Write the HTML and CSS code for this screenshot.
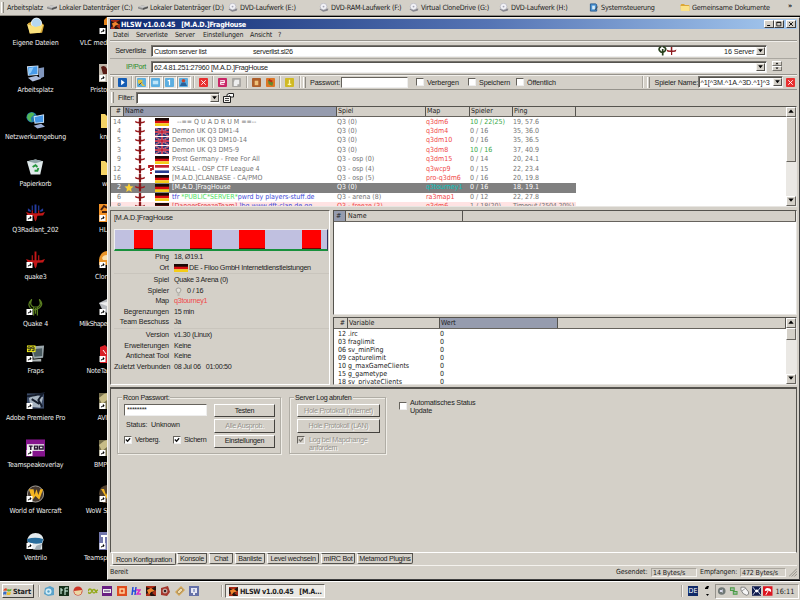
FILE: index.html
```html
<!DOCTYPE html>
<html lang="de">
<head>
<meta charset="utf-8">
<title>HLSW v1.0.0.45</title>
<link rel="stylesheet" href="styles.css">
</head>
<body>
<svg class="defs" width="0" height="0">
  <symbol id="quake" viewBox="0 0 12 10"><path d="M.5 3L3 4.200H9L11.500 3 11 5.400 7.200 6V8.500L6 10 4.800 8.500V6L1 5.400ZM4.700 0H7.300V5H4.700Z" fill="#9c1a1e"/><path d="M5.500 1H6.500V8H5.500Z" fill="#5c1418"/></symbol>
  <symbol id="de" viewBox="0 0 14 8" preserveAspectRatio="none"><path fill="#1a0804" d="M0 0h14v3H0z"/><path fill="#d90d10" d="M0 2.700h14v2.600H0z"/><path fill="#f5cc16" d="M0 5.300h14V8H0z"/></symbol>
  <symbol id="uk" viewBox="0 0 14 8" preserveAspectRatio="none"><path fill="#273070" d="M0 0h14v8H0z"/><path d="M0 0l14 8M14 0L0 8" stroke="#c8a8c0" stroke-width="1.500"/><path d="M0 0l14 8M14 0L0 8" stroke="#b83048" stroke-width=".8"/><path d="M7 0v8M0 4h14" stroke="#d8b8c8" stroke-width="2.200"/><path d="M7 0v8M0 4h14" stroke="#c01830" stroke-width="1.400"/></symbol>
  <symbol id="nl" viewBox="0 0 14 8" preserveAspectRatio="none"><path fill="#c8202c" d="M0 0h14v3H0z"/><path fill="#fff" d="M0 2.700h14v2.700H0z"/><path fill="#283c90" d="M0 5.400h14V8H0z"/></symbol>
  <symbol id="drive" viewBox="0 0 10 8"><path d="M0 3.500L4 2 10 3 9.500 5 5 6.500 0 5Z" fill="#8b8b8b"/><path d="M0 3.500L4 2 10 3 5 4.500Z" fill="#c9c9c9"/><path d="M5 4.500L10 3V4.500L5 6.300Z" fill="#555"/></symbol>
  <symbol id="disc" viewBox="0 0 10 10"><path d="M0 7L3 5.500 10 6.500 9 8.500 4 9.700Z" fill="#85858d"/><circle cx="4.500" cy="4" r="3.700" fill="#f1f1f6" stroke="#a5a5b1" stroke-width=".6"/><circle cx="4.500" cy="4" r="1" fill="#a6a6b6"/></symbol>
  <symbol id="folder" viewBox="0 0 20 18"><path d="M1 4L3 2H8L10 4H17Q19 4 19 6V16H2Z" fill="#dca735"/><path d="M1 6H17Q19 6 19 8V16H2Z" fill="#fbe289"/></symbol>
  <symbol id="open" viewBox="0 0 20 18"><path d="M2 6L12 2 19 8 17 16 4 17Z" fill="#d9a836"/><circle cx="11" cy="6" r="5.300" fill="#b5d7f0" stroke="#eef6fb"/><path d="M1 7L10 10 18 8 15 16 4 17Z" fill="#fae17c"/></symbol>
  <symbol id="pc" viewBox="0 0 20 18"><path d="M13 4L19 3V13L14 15Z" fill="#8196bd"/><path d="M1 2L13 1V11L2 12Z" fill="#d6e5f5"/><path d="M2 3L12 2V10L3 11Z" fill="#489bea"/><path d="M3 4L8 3 5 9 3 10Z" fill="#8dcafa"/><path d="M2 14L11 12 16 15 7 18Z" fill="#aebddc"/></symbol>
  <symbol id="net" viewBox="0 0 20 18"><circle cx="6" cy="6" r="5.500" fill="#227bae"/><path d="M2 3Q7-1 9 3L5 7 6 11Q2 10 1 6Z" fill="#52b857"/><path d="M8 5L19 3V12L9 13Z" fill="#d0e4f7"/><path d="M9 6L18 4V11L10 12Z" fill="#4395e5"/><path d="M8 15L16 13 20 16 12 18Z" fill="#9baed5"/></symbol>
  <symbol id="bin" viewBox="0 0 20 18"><path d="M1 3L10 1 18 3 15 17 5 17Z" fill="#dfe9ea"/><path d="M2 3L10 5 17 3 10 1Z" fill="#8fa4a8"/><path d="M7 9L10 7 12 9M13 10L12 13H9" stroke="#24953c" stroke-width="2" fill="none"/></symbol>
  <symbol id="q3" viewBox="0 0 20 18"><path d="M0 8L4 9.300H16L20 8 18 11.500 12 12 11 16 10 18 9 16 8 12 2 11.500ZM9 0H11V11H9ZM6 4H7.200V11H6ZM12.800 4H14V11H12.800Z" fill="#c41718"/></symbol>
  <symbol id="q3b" viewBox="0 0 20 18"><path d="M0 8L4 9.300H16L20 8 18 11.500 12 12 11 16 10 18 9 16 8 12 2 11.500ZM6 6H7.200V11H6ZM12.800 6H14V11H12.800Z" fill="#c41718"/><path d="M9 0H11V9H9ZM6 1H7.200V6H6ZM12.800 1H14V6H12.800ZM2 4L5 6V8L2 7ZM18 4L15 6V8L18 7Z" fill="#243ca0"/></symbol>
  <symbol id="q4" viewBox="0 0 20 18"><path d="M6 1Q0 7 6 11Q8 13 12 11Q20 7 14 1Q17 7 12 9H8Q3 7 6 1ZM8 9V18M12 9V18M10 10V16" fill="none" stroke="#587c20" stroke-width="1.300"/></symbol>
  <symbol id="fraps" viewBox="0 0 20 18"><path d="M5 1L19 0 18 13 8 14Z" fill="#9aa6ab"/><path d="M7 4L17 3V11L9 12Z" fill="#4b5c61"/><path d="M6 15L16 14V17H7Z" fill="#a9b0b0"/><path d="M1 0H10V7H1Z" fill="#f5f118"/><path d="M4.500 3.500H2V1.500H4.500V5.500H2M8.500 3.500H6V1.500H8.500V5.500H6" stroke="#222" fill="none"/></symbol>
  <symbol id="prem" viewBox="0 0 20 18"><path d="M1 1H19V17H1Z" fill="#3c4b67"/><path d="M3 6L10 2 18 5 15 16 5 15Z" fill="#a7b4c1"/><path d="M1 4L9 3 18 1 13 8 17 15M6 7L14 12" stroke="#151d2c" stroke-width="2" fill="none"/></symbol>
  <symbol id="tso" viewBox="0 0 20 18"><path d="M0 0H20V18H0Z" fill="#85148d"/><path d="M1 5H19V12H1Z" fill="#eee"/><path d="M3 7H7M5 7V11M9 7H12V10H9ZM14 7H18V10H14Z" stroke="#261130" stroke-width="1.500" fill="none"/></symbol>
  <symbol id="wow" viewBox="0 0 20 18"><circle cx="10" cy="9" r="8.500" fill="#45382f" stroke="#a6a29c"/><path d="M3 4H8L9 10 11 4 13 10 15 4H18L14 15 10 11 7 15Z" fill="#f3b521"/></symbol>
  <symbol id="vent" viewBox="0 0 20 18"><path d="M10 .5Q18 1 18.500 8L17 12V18H8Q1 15 1.500 7Q3 1 10 .5Z" fill="#e4eaed"/><path d="M1 7Q10 4 18 7L17 11Q9 13 2 10Z" fill="#286d9d"/><path d="M11 14L17 12 15 18H9Z" fill="#a3b0b8"/></symbol>
  <symbol id="arrow" viewBox="0 0 7 7"><path fill="#fff" d="M0 0h7v7H0z"/><path d="M1.500 6Q1.500 3 4 2.800V1L6 3.200 4 5V4Q2.500 4 1.500 6Z"/></symbol>
  <symbol id="hlsw" viewBox="0 0 10 10"><path fill="#a92b18" d="M0 0h10v10H0z"/><path d="M0 1L5 3 10 0V4L6 7 10 10H5L2 7 0 8Z" fill="#251410"/><path d="M1 4L5 2 9 5 5 6 3 9Z" fill="#f0852e"/></symbol>
  <symbol id="box" viewBox="0 0 10 10"><path d="M0 1Q0 0 1 0H9Q10 0 10 1V9Q10 10 9 10H1Q0 10 0 9Z" fill="currentColor"/></symbol>
  <symbol id="down" viewBox="0 0 6 4"><path d="M1 .5H5L3 3Z"/></symbol>
  <symbol id="up" viewBox="0 0 6 4"><path d="M1 3H5L3 .5Z"/></symbol>
  <symbol id="check" viewBox="0 0 7 7"><path d="M1 3L3 5 6 1.500" fill="none" stroke="currentColor" stroke-width="1.500"/></symbol>
</svg>

<nav class="linkbar">
  <i class="grip"></i>
  <span class="lk l1">Arbeitsplatz</span>
  <span class="lk l2"><svg><use href="#drive"/></svg>Lokaler Datenträger (C:)</span>
  <span class="lk l3"><svg><use href="#drive"/></svg>Lokaler Datenträger (D:)</span>
  <span class="lk l4"><svg><use href="#disc"/></svg>DVD-Laufwerk (E:)</span>
  <span class="lk l5"><svg><use href="#disc"/></svg>DVD-RAM-Laufwerk (F:)</span>
  <span class="lk l6"><svg><use href="#disc"/></svg>Virtual CloneDrive (G:)</span>
  <span class="lk l7"><svg><use href="#disc"/></svg>DVD-Laufwerk (H:)</span>
  <span class="lk l8"><svg viewBox="0 0 10 10"><path d="M1 1H7L8 2V9H1Z" fill="#4d96d5" stroke="#23578d"/><path d="M3 3H6V7H3Z" fill="#d8edfb"/><path d="M6 8L9 4" stroke="#444"/></svg>Systemsteuerung</span>
  <span class="lk l9"><svg><use href="#folder"/></svg>Gemeinsame Dokumente</span>
  <span class="more">»</span>
</nav>

<main class="desktop">
  <div class="col">
    <div class="dicon"><svg><use href="#open"/></svg><span>Eigene Dateien</span></div>
    <div class="dicon"><svg><use href="#pc"/></svg><span>Arbeitsplatz</span></div>
    <div class="dicon"><svg><use href="#net"/></svg><span>Netzwerkumgebung</span></div>
    <div class="dicon"><svg><use href="#bin"/></svg><span>Papierkorb</span></div>
    <div class="dicon"><svg><use href="#q3b"/><use href="#arrow" x="0" y="11" width="7" height="6"/></svg><span>Q3Radiant_202</span></div>
    <div class="dicon"><svg><use href="#q3"/><use href="#arrow" x="0" y="11" width="7" height="6"/></svg><span>quake3</span></div>
    <div class="dicon"><svg><use href="#q4"/><use href="#arrow" x="0" y="11" width="7" height="6"/></svg><span>Quake 4</span></div>
    <div class="dicon"><svg><use href="#fraps"/><use href="#arrow" x="0" y="11" width="7" height="6"/></svg><span>Fraps</span></div>
    <div class="dicon"><svg><use href="#prem"/><use href="#arrow" x="0" y="11" width="7" height="6"/></svg><span>Adobe Premiere Pro</span></div>
    <div class="dicon"><svg><use href="#tso"/><use href="#arrow" x="0" y="11" width="7" height="6"/></svg><span>Teamspeakoverlay</span></div>
    <div class="dicon"><svg><use href="#wow"/><use href="#arrow" x="0" y="11" width="7" height="6"/></svg><span>World of Warcraft</span></div>
    <div class="dicon"><svg><use href="#vent"/><use href="#arrow" x="0" y="11" width="7" height="6"/></svg><span>Ventrilo</span></div>
  </div>
  <div class="col cut">
    <div class="dicon"><svg viewBox="0 0 8 18"><path d="M5 3L8 0V8H5Z" fill="#e7861d"/><use href="#arrow" y="11" width="7" height="6"/></svg><span>VLC med</span></div>
    <div class="dicon"><svg viewBox="0 0 8 18"><path d="M0 0H8V18H0Z" fill="#bdb5a9"/><path d="M2 3Q6 0 8 5V10H4Z" fill="#571a15"/><use href="#arrow" y="11" width="7" height="6"/></svg><span>Pristo</span></div>
    <div class="dicon"><svg viewBox="0 0 8 18"><path d="M2 3H6L8 5V17H2Z" fill="#f4d365"/></svg><span>kn</span></div>
    <div class="dicon"><svg viewBox="0 0 8 18"><path d="M2 3H6L8 5V17H2Z" fill="#f4d365"/></svg><span>w</span></div>
    <div class="dicon"><svg viewBox="0 0 8 18"><path d="M0 0H8V18H0Z" fill="#f29226"/><path d="M2 6L5 2 8 4M3 8H8" stroke="#442010" stroke-width="2" fill="none"/><use href="#arrow" y="11" width="7" height="6"/></svg><span>HL</span></div>
    <div class="dicon"><svg viewBox="0 0 8 18"><path d="M0 9Q1 1 8 0V14H0Z" fill="#e99428"/><path d="M3 7Q4 4 8 4V9H4Z" fill="#f9dfab"/><use href="#arrow" y="11" width="7" height="6"/></svg><span>Clor</span></div>
    <div class="dicon"><svg viewBox="0 0 8 18"><path d="M0 5L8 1V15L3 11Z" fill="#b9bcc0"/><path d="M0 5L8 4V8Z" fill="#eee"/><use href="#arrow" y="11" width="7" height="6"/></svg><span class="tight">MilkShape</span></div>
    <div class="dicon"><svg viewBox="0 0 8 18"><path d="M1 2L6 0 8 2V18H1Z" fill="#d91f26"/><path d="M4 5L7 9" stroke="#fff"/><use href="#arrow" y="11" width="7" height="6"/></svg><span>NoteTa</span></div>
    <div class="dicon"><svg viewBox="0 0 8 18"><path d="M0 1H8V17H0Z" fill="#77704d"/><path d="M0 6L5 2 8 1V8L3 12Z" fill="#c8bd88"/><use href="#arrow" y="11" width="7" height="6"/></svg><span>AVI</span></div>
    <div class="dicon"><svg viewBox="0 0 8 18"><path d="M0 1H8V17H0Z" fill="#77704d"/><path d="M0 6L5 2 8 1V8L3 12Z" fill="#c8bd88"/><use href="#arrow" y="11" width="7" height="6"/></svg><span>BMP</span></div>
    <div class="dicon"><svg viewBox="0 0 8 18"><path d="M0 9Q0 1 8 0V18H4Z" fill="#51402f"/><path d="M2 4H5L7 10 8 8V14Z" fill="#f3b521"/><use href="#arrow" y="11" width="7" height="6"/></svg><span>WoW S</span></div>
    <div class="dicon"><svg viewBox="0 0 8 18"><path d="M0 0H8V18H0Z" fill="#7277ac"/><path d="M2 4H8M5 4V11" stroke="#fff" stroke-width="2"/><use href="#arrow" y="11" width="7" height="6"/></svg><span>Teamsp</span></div>
  </div>

  <section class="window">
    <header class="title"><svg><use href="#hlsw"/></svg><b>HLSW v1.0.0.45 &nbsp; [M.A.D.]FragHouse</b>
      <span class="wb"><svg viewBox="0 0 9 8"><path d="M2 6H6" stroke="#000" stroke-width="1.300"/></svg></span><span class="wb"><svg viewBox="0 0 9 8"><path d="M1.500 1.500H7V6.500H1.500ZM1.500 2H7" fill="none" stroke="#000"/></svg></span><span class="wb x"><svg viewBox="0 0 9 8"><path d="M2 1.500L7 6.500M7 1.500L2 6.500" stroke="#000" stroke-width="1.200"/></svg></span>
    </header>
    <nav class="menu"><span class="m1">Datei</span><span class="m2">Serverliste</span><span class="m3">Server</span><span class="m4">Einstellungen</span><span class="m5">Ansicht</span><span>?</span></nav>

    <div class="addr ms">
      <label>Serverliste</label>
      <div class="combo"><span class="csl">Custom server list</span><span class="file">serverlist.sl26</span>
        <svg class="gi" viewBox="0 0 20 10"><path d="M4 .8Q0 3 4 6Q6 7 8 5Q10 2 6 .8M5.700 3V9.500" fill="none" stroke="#27401b" stroke-width="1.700"/><path d="M9.500 3.500L12 4.500H17L19.500 3.500 18.500 5.800 15.200 6V9H14V6L10.500 5.800ZM13.800 1H15.300V6H13.800Z" fill="#8e1a1e"/></svg>
        <span class="cnt">16 Server</span><i class="dd"><svg><use href="#down"/></svg></i></div>
    </div>
    <div class="addr ms two">
      <label class="green">IP/Port</label>
      <div class="combo"><span class="ip">62.4.81.251:27960 [M.A.D.]FragHouse</span><i class="dd"><svg><use href="#down"/></svg></i></div>
      <div class="spin"><i><svg><use href="#up"/></svg></i><i><svg><use href="#down"/></svg></i></div>
    </div>

    <div class="tools ms">
      <i class="grip"></i>
      <span class="tb"><svg viewBox="0 0 10 10" class="c-blue"><use href="#box"/><path d="M3.500 2L7.500 5 3.500 8Z" fill="#fff"/></svg></span>
      <i class="sep"></i>
      <span class="tb on"><svg viewBox="0 0 10 10" class="c-sky"><use href="#box"/><path d="M1 2H6V6L9 9H6L4 6H1Z" fill="#e3c540"/><path d="M2 8L5 5" stroke="#533" /></svg></span><span class="tb on"><svg viewBox="0 0 10 10" class="c-sky"><use href="#box"/><path d="M2 3H8V7H2Z" fill="#bfe5f9"/></svg></span><span class="tb on"><svg viewBox="0 0 10 10" class="c-sky"><use href="#box"/><path d="M5 2V8M3 3H5" stroke="#fff" stroke-width="1.300"/></svg></span><span class="tb on"><svg viewBox="0 0 10 10" class="c-sky"><use href="#box"/><circle cx="5" cy="3" r="2" fill="#c7432d"/><path d="M1 9L3 5H7L9 9Z" fill="#28619a"/></svg></span>
      <i class="sep"></i>
      <span class="tb"><svg viewBox="0 0 10 10" class="c-red"><use href="#box"/><path d="M2.500 2.500L7.500 7.500M7.500 2.500L2.500 7.500" stroke="#fff"/></svg></span>
      <i class="sep"></i>
      <span class="tb"><svg viewBox="0 0 10 10" class="c-pink"><use href="#box"/><path d="M3 4V3H7V5H3V7H7" fill="none" stroke="#fff" stroke-width="1.200"/></svg></span><span class="tb"><svg viewBox="0 0 10 10" class="c-gray"><use href="#box"/><path d="M3 2H8V7H6V9H2V5Z" fill="#eee"/></svg></span>
      <i class="sep"></i>
      <span class="tb"><svg viewBox="0 0 10 10" class="c-brown"><use href="#box"/><path d="M3 3H7V8H3Z" fill="#efc27a"/></svg></span><span class="tb"><svg viewBox="0 0 10 10" class="c-orange"><use href="#box"/><path d="M2 2L8 5 7 9 3 7Z" fill="#63882e"/><path d="M3 2L7 4" stroke="#c12c13" stroke-width="2"/></svg></span>
      <i class="sep"></i>
      <span class="tb"><svg viewBox="0 0 10 10" class="c-yellow"><use href="#box"/><path d="M5 2V8M3 7H7" stroke="#fff7b0" stroke-width="1.400"/></svg></span>
      <i class="sep"></i><i class="grip g2"></i>
      <span class="pw">Passwort:</span><span class="input"></span>
      <i class="cb"></i><span class="t1">Verbergen</span><i class="cb"></i><span class="t2">Speichern</span><i class="cb"></i><span class="t3">Öffentlich</span>
      <i class="sep last"></i><i class="grip"></i>
      <span class="pn">Spieler Name:</span>
      <div class="combo name"><span>^1[^3M.^1A.^3D.^1]^3</span><i class="dd"><svg><use href="#down"/></svg></i></div>
      <svg viewBox="0 0 10 10" class="kill c-red"><use href="#box"/><path d="M2.500 2.500L7.500 7.500M7.500 2.500L2.500 7.500" stroke="#fff"/></svg>
    </div>
    <div class="filter ms"><i class="grip"></i><label>Filter:</label><div class="combo"><i class="dd"><svg><use href="#down"/></svg></i></div><svg class="prop" viewBox="0 0 11 10"><path d="M.5 3.500H7.500V9.500H.5Z" fill="#f4f2ee" stroke="#222"/><path d="M2 5.500H6M2 7.500H6" stroke="#444"/><path d="M4 3V1.500L6 .5H10.500V4H8L6 2.500" fill="#fff" stroke="#222"/></svg></div>

    <div class="list servers">
      <div class="tablepart">
        <div class="row head"><span class="num">#</span><span class="nm">Name</span><span>Spiel</span><span>Map</span><span>Spieler</span><span>Ping</span></div>
        <div class="rows">
        <div class="row"><span class="num">14</span><svg class="q"><use href="#quake"/></svg><svg class="f"><use href="#de"/></svg><span class="n quad">--== Q U A D R U M ==--</span><span>Q3 (0)</span><span class="map">q3dm6</span><span class="gr">10 / 22(25)</span><span>19, 57.6</span></div>
        <div class="row"><span class="num">4</span><svg class="q"><use href="#quake"/></svg><svg class="f"><use href="#uk"/></svg><span class="n">Demon UK Q3 DM1-4</span><span>Q3 (0)</span><span class="map">q3dm4</span><span>0 / 16</span><span>35, 36.0</span></div>
        <div class="row"><span class="num">5</span><svg class="q"><use href="#quake"/></svg><svg class="f"><use href="#uk"/></svg><span class="n">Demon UK Q3 DM10-14</span><span>Q3 (0)</span><span class="map">q3dm10</span><span>0 / 16</span><span>35, 36.5</span></div>
        <div class="row"><span class="num">3</span><svg class="q"><use href="#quake"/></svg><svg class="f"><use href="#uk"/></svg><span class="n">Demon UK Q3 DM5-9</span><span>Q3 (0)</span><span class="map">q3dm8</span><span class="gr">10 / 16</span><span>37, 40.9</span></div>
        <div class="row"><span class="num">9</span><svg class="q"><use href="#quake"/></svg><svg class="f"><use href="#de"/></svg><span class="n">Prost Germany - Free For All</span><span>Q3 - osp (0)</span><span class="map">q3dm15</span><span>0 / 14</span><span>20, 24.1</span></div>
        <div class="row"><span class="num">12</span><svg class="q"><use href="#quake"/></svg><svg class="k" viewBox="0 0 6 9"><path d="M1 3V1H5V4H3V6M3 7V9" fill="none" stroke="#b3161c" stroke-width="1.800"/></svg><svg class="f"><use href="#nl"/></svg><span class="n">XS4ALL - OSP CTF League 4</span><span>Q3 - osp (4)</span><span class="map">q3wcp9</span><span>0 / 15</span><span>22, 23.4</span></div>
        <div class="row"><span class="num">16</span><svg class="q"><use href="#quake"/></svg><svg class="f"><use href="#de"/></svg><span class="n">[M.A.D.]CLANBASE - CA/PMO</span><span>Q3 - osp (5)</span><span class="map">pro-q3dm6</span><span>0 / 16</span><span>20, 19.8</span></div>
        <div class="row sel"><span class="num">2</span><svg class="s" viewBox="0 0 10 10"><path d="M5 0L6.500 3.500 10 4 7.300 6.300 8 10 5 8 2 10 2.700 6.300 0 4 3.500 3.500Z" fill="#fbd234"/></svg><svg class="q"><use href="#quake"/></svg><svg class="f"><use href="#de"/></svg><span class="n">[M.A.D.]FragHouse</span><span>Q3 (0)</span><span class="map">q3tourney1</span><span>0 / 16</span><span>18, 19.1</span></div>
        <div class="row"><span class="num">6</span><svg class="q"><use href="#quake"/></svg><svg class="f"><use href="#de"/></svg><span class="n blue">tfr <em>*PUBLIC*SERVER*</em>pwrd by players-stuff.de</span><span>Q3 - arena (8)</span><span class="map">ra3map1</span><span>0 / 12</span><span>22, 27.8</span></div>
        <div class="row bad"><span class="num">8</span><svg class="q"><use href="#quake"/></svg><svg class="f"><use href="#de"/></svg><span class="n blue"><em>[DangerFreezeTeam]</em> ]bg www.dft-clan.de.gg</span><span class="map">Q3 - freeze (3)</span><span class="map">q3dm6</span><span>1 / 18(20)</span><span>Timeout (2504 20%)</span></div>
        </div>
      </div>
      <div class="scroll"><i class="sb"><svg><use href="#up"/></svg></i><i class="thumb"></i><i class="sb end"><svg><use href="#down"/></svg></i></div>
    </div>

    <div class="mid">
      <div class="info ms">
        <h2>[M.A.D.]FragHouse</h2>
        <div class="graph"><i class="a"></i><i class="b"></i><i class="c"></i><i class="d"></i></div>
        <dl>
          <dt>Ping</dt><dd>18, Ø19.1</dd>
          <dt>Ort</dt><dd class="ort"><svg class="f"><use href="#de"/></svg>DE - Filoo GmbH Internetdienstleistungen</dd>
          <dt class="gap">Spiel</dt><dd class="gap">Quake 3 Arena (0)</dd>
          <dt>Spieler</dt><dd><svg class="bulb" viewBox="0 0 7 9"><path d="M1 3Q1 1 3.500 1Q6 1 6 3Q5 5 4.500 6H2.500Q2 5 1 3ZM2.500 8H4.500" fill="#e3e1dc" stroke="#96938c" stroke-width=".8"/></svg>0 / 16</dd>
          <dt>Map</dt><dd class="red">q3tourney1</dd>
          <dt>Begrenzungen</dt><dd>15 min</dd>
          <dt>Team Beschuss</dt><dd>Ja</dd>
          <dt class="gap">Version</dt><dd class="gap">v1.30 (Linux)</dd>
          <dt>Erweiterungen</dt><dd>Keine</dd>
          <dt>Anticheat Tool</dt><dd>Keine</dd>
          <dt>Zuletzt Verbunden</dt><dd>08 Jul 06 &nbsp; 01:00:50</dd>
        </dl>
      </div>
      <div class="right">
        <div class="list players"><div class="phead"><span class="hot">#</span><span>Name</span><span></span></div></div>
        <div class="list vars">
          <div class="tablepart">
            <div class="vrow vhead"><span class="num">#</span><span>Variable</span><span class="hot">Wert</span><span></span></div>
            <div class="vrow"><span class="num">12</span><span>.irc</span><span>0</span></div>
            <div class="vrow"><span class="num">03</span><span>fraglimit</span><span>0</span></div>
            <div class="vrow"><span class="num">06</span><span>sv_minPing</span><span>0</span></div>
            <div class="vrow"><span class="num">09</span><span>capturelimit</span><span>0</span></div>
            <div class="vrow"><span class="num">10</span><span>g_maxGameClients</span><span>0</span></div>
            <div class="vrow"><span class="num">15</span><span>g_gametype</span><span>0</span></div>
            <div class="vrow"><span class="num">18</span><span>sv_privateClients</span><span>0</span></div>
          </div>
          <div class="scroll"><i class="sb"><svg><use href="#up"/></svg></i><i class="thumb"></i><i class="sb end"><svg><use href="#down"/></svg></i></div>
        </div>
      </div>
    </div>

    <div class="rcon ms">
      <fieldset class="fs1"><legend>Rcon Passwort:</legend>
        <div class="left"><span class="input">********</span><span class="status">Status: &nbsp;Unknown</span>
          <div class="checks"><i class="cb"><svg><use href="#check"/></svg></i><span>Verberg.</span><i class="cb"><svg><use href="#check"/></svg></i><span>Sichern</span></div></div>
        <div class="btns"><button>Testen</button><button disabled>Alle Ausprob.</button><button>Einstellungen</button></div>
      </fieldset>
      <fieldset class="fs2"><legend>Server Log abrufen</legend>
        <div class="btns"><button disabled>Hole Protokoll (Internet)</button><button disabled>Hole Protokoll (LAN)</button></div>
        <div class="log"><i class="cb"><svg><use href="#check"/></svg></i><span>Log bei Mapchange<br>anfordern</span></div>
      </fieldset>
      <div class="auto"><i class="cb"></i><span>Automatisches Status<br>Update</span></div>
    </div>
    <div class="tabs ms"><span class="t cur">Rcon Konfiguration</span><span class="t w1">Konsole</span><span class="t w2">Chat</span><span class="t w3">Banliste</span><span class="t w4">Level wechseln</span><span class="t w5">mIRC Bot</span><span class="t w6">Metamod Plugins</span></div>
    <footer class="statusbar"><span class="rdy">Bereit</span><span class="ge">Gesendet:</span><span class="box b1">14 Bytes/s</span><span class="em">Empfangen:</span><span class="box b2">472 Bytes/s</span><svg class="size" viewBox="0 0 9 9"><path d="M0 9L9 0M3 9L9 3M6 9L9 6" stroke="#88857e"/></svg></footer>
  </section>
</main>

<footer class="taskbar">
  <span class="start"><svg viewBox="0 0 10 9"><path d="M1 2Q3 0 4.500 1.500L4 4Q2 3 .5 4Z" fill="#dd4a2b"/><path d="M5 1.500Q7 3 9.500 1.500L9 4Q6 5 4.500 4Z" fill="#5bab38"/><path d="M.5 5Q2 4 4 5L3.500 8Q2 7 0 8Z" fill="#356bc6"/><path d="M4.500 5Q6 6 9 5L8 8Q6 9 4 8Z" fill="#eabc25"/></svg>Start</span>
  <i class="sep"></i>
  <div class="quick">
    <svg viewBox="0 0 10 10"><path d="M1 2L6 0 10 2V9L4 10 0 8Z" fill="#5aa2c9"/><circle cx="4.500" cy="5.500" r="3" fill="#d3edf6"/><circle cx="4.500" cy="5.500" r="1.200" fill="#5aa2c9"/></svg>
    <svg viewBox="0 0 10 10"><path d="M0 0H10V10H0Z" fill="#16301a"/><path d="M2 2V8M4 4H2M6 9V2H9M6 5H9" stroke="#dfe" fill="none"/></svg>
    <svg viewBox="0 0 10 10"><circle cx="5" cy="5" r="4.500" fill="#cb3325"/><path d="M1 5L9 4 8 8Q5 10 2 8Z" fill="#ecd7a4"/></svg>
    <svg viewBox="0 0 10 10"><path d="M0 5Q2 1 4 5T8 5L10 4M0 6Q2 9 4 5T9 7" fill="none" stroke="#95a91d" stroke-width="1.500"/></svg>
    <svg viewBox="0 0 10 10"><path d="M0 0H10V10H0Z" fill="#692082"/><path d="M1 3H9V7H1Z" fill="#eee"/><path d="M2 5H8" stroke="#426"/></svg>
    <svg viewBox="0 0 10 10"><path d="M0 0H10V10H0Z" fill="#df4d1d"/><path d="M3 3H7V7H3Z" fill="none" stroke="#ffd09a" stroke-width="1.500"/></svg>
    <svg viewBox="0 0 10 10"><path d="M2 1L1 9M5 1L4 9M1 5H5" stroke="#254cdc" stroke-width="1.500"/><path d="M5 4H9L6 8H10" fill="none" stroke="#d72cc4" stroke-width="1.500"/></svg>
    <svg><use href="#hlsw"/></svg>
    <svg viewBox="0 0 10 10"><path d="M1 2L8 0 10 6 7 10 1 9Z" fill="#a4362c"/><circle cx="5" cy="5" r="2.500" fill="#c2a19b"/><circle cx="5" cy="5" r="1"/></svg>
    <svg viewBox="0 0 10 10"><path d="M0 6L6 0 10 4 4 10Z" fill="#d2a452"/><path d="M2 6L6 2 8 4 4 8Z" fill="#f2dba8" stroke="#765" stroke-width=".5"/></svg>
    <svg viewBox="0 0 10 10"><path d="M0 0H10V10H0Z" fill="#6571a8"/><path d="M2 2H8V7H6V9H4V7H2Z" fill="#e5e7f3"/><path d="M5 3V6" stroke="#56a"/></svg>
  </div>
  <i class="sep s2"></i>
  <span class="task"><svg><use href="#hlsw"/></svg>HLSW v1.0.0.45 &nbsp; [M.A...</span>
  <div class="tray"><i class="sep"></i><span class="lang">DE</span><svg class="pen" viewBox="0 0 6 12"><path d="M1 3L3 1H5L4 4H1ZM2 9H5L3.500 11Z"/></svg>
    <div class="sys">
      <svg viewBox="0 0 10 10"><circle cx="5" cy="5" r="4" fill="#707876"/><path d="M3 4H5L6 3V7L5 6H3Z" fill="#dde"/></svg>
      <svg viewBox="0 0 10 10"><path d="M1 1H6V5H1ZM4 5H9V9H4Z" fill="#4b9b44"/><path d="M5 7H8M2 3H5" stroke="#dde"/></svg>
      <svg viewBox="0 0 10 10"><path d="M1 1L5 1 9 6Q10 9 7 9.500Q3 9 1 4Z" fill="#f5f5f5" stroke="#555" stroke-width=".7"/><path d="M2 5L6 2" stroke="#555" stroke-width=".6"/></svg>
      <svg viewBox="0 0 10 10"><path d="M0 0H10V10H0Z" fill="#101c4e"/><path d="M1 1L4 5 1 9M9 1L6 5 9 9" fill="none" stroke="#d8dff0"/><circle cx="5" cy="5" r="1.500" fill="#fff"/></svg>
      <svg viewBox="0 0 10 10"><path d="M0 0H10V10H0Z" fill="#dc1620"/><path d="M2 5Q2 1 6 2Q9 2 8.500 6L5.500 4.500Z" fill="#fff"/><path d="M5.500 4.500L3 9" stroke="#fff"/></svg>
      <span>16:11</span>
    </div></div>
</footer>
</body>
</html>
```
FILE: styles.css
```css
* { box-sizing: border-box; }
body { margin: 0; width: 800px; height: 600px; overflow: hidden; background: #000; display: flex; flex-direction: column;
  font: 7px/9px "DejaVu Sans Condensed", "DejaVu Sans", sans-serif; color: #222; white-space: nowrap; }
i, em { font-style: normal; }
i { display: block; flex: none; }
svg { display: block; flex: none; }
.defs { position: absolute; }
.ms { font-family: "Liberation Sans", sans-serif; font-size: 7.2px; letter-spacing: -.28px; }

.grip { width: 3px; height: 11px; border-left: 1px solid #fff; border-right: 1px solid #8c8982; margin: 0 1px; }
.sep { width: 2px; height: 12px; border-left: 1px solid #aaa69e; border-right: 1px solid #f4f2ee; }

/* link bar */
.linkbar { height: 16px; flex: none; background: #d4d0c8; border-bottom: 1px solid #8e8a82; display: flex; align-items: center; font-size: 7.2px; letter-spacing: -.22px; }
.linkbar .grip { margin: 0 3px 0 1px; }
.lk { display: flex; align-items: center; flex: none; }
.lk svg { width: 10px; height: 9px; margin-right: 2px; }
.l1 { width: 40px; } .l2 { width: 91px; } .l3 { width: 90px; } .l4 { width: 91px; } .l5 { width: 90px; }
.l6 { width: 90px; } .l7 { width: 90px; } .l8 { width: 91px; } .l9 { width: 108px; }
.more { font-weight: bold; line-height: 6px; padding-bottom: 4px; }

/* desktop */
.desktop { flex: none; height: 565px; display: flex; }
.col { width: 71px; flex: none; padding-top: 1px; }
.cut { width: 36px; overflow: hidden; }
.dicon { height: 46.85px; display: flex; flex-direction: column; align-items: center; color: #eee; letter-spacing: -.15px; }
.dicon svg { width: 19px; height: 18px; margin-bottom: 4px; }
.cut .dicon { align-items: flex-end; }
.cut .dicon svg { width: 8px; }
.tight { letter-spacing: -.5px; }

/* window */
.window { width: 693px; height: 563px; margin-top: 1px; background: #d4d0c8; border: 1px solid #f2f0ec; border-right: 1px solid #404040; border-bottom: 1px solid #404040; padding: 1px 2px 0 2px; display: flex; flex-direction: column; }
.window > * { flex: none; }
.title { height: 10px; display: flex; align-items: center; background: linear-gradient(90deg, #0d2870, #5574b4 55%, #a6caf0); color: #fff; font-size: 7.2px; letter-spacing: -.25px; padding-right: 1px; }
.title > svg { width: 9px; height: 9px; margin: 0 1px; }
.title b { flex: 1; }
.wb { width: 10px; height: 8px; background: #d4d0c8; border: 1px solid #fff; border-right-color: #404040; border-bottom-color: #404040; }
.wb svg { width: 8px; height: 6px; }
.wb.x { margin-left: 2px; }
.menu { height: 12px; border-bottom: 1px solid #98958e; box-shadow: 0 1px #f0eeea; display: flex; align-items: center; padding: 1px 0 0 3px; letter-spacing: -.18px; }
.m1 { width: 23px; } .m2 { width: 39px; } .m3 { width: 28px; } .m4 { width: 47px; } .m5 { width: 28px; }

.combo { background: #fff; border: 1px solid #77746e; border-right-color: #eee; border-bottom-color: #eee; box-shadow: inset 1px 1px #55534e; display: flex; align-items: center; }
.dd { width: 9px; height: 8px; background: #d4d0c8; border: 1px solid #f6f4f0; border-right-color: #55534e; border-bottom-color: #55534e; margin-left: auto; }
.dd svg { width: 7px; height: 6px; }
.addr { height: 17px; display: flex; align-items: flex-start; padding-top: 4px; }
.addr label { width: 41px; padding: 1px 5px 0 0; text-align: right; }
.addr .combo { width: 616px; height: 12px; padding: 0 1px 0 2px; }
.two { height: 16px; border-top: 1px solid #aaa7a0; padding-top: 2px; }
.green { color: #2a8a2a; }
.csl { width: 99px; } .file { width: 404px; } .gi { width: 20px; height: 10px; } .cnt { margin-left: 47px; letter-spacing: -.1px; }
.spin { margin-left: 5px; }
.spin i { width: 10px; height: 5px; border: 1px solid #fff; border-right-color: #77746e; border-bottom-color: #77746e; }
.spin svg { width: 8px; height: 3px; }

.tools { height: 16px; border-top: 1px solid #96938c; border-bottom: 1px solid #96938c; box-shadow: inset 0 1px #f2f0ec; display: flex; align-items: center; }
.tb { width: 14px; height: 13px; flex: none; display: flex; align-items: center; justify-content: center; }
.tb svg, .kill { width: 9px; height: 9px; }
.tb.on { background: #e8e5df; border: 1px solid #a3a098; border-right-color: #fff; border-bottom-color: #fff; }
.tools > .sep { margin: 0 1.500px 0 2px; }
.c-blue { color: #145cb4; } .c-sky { color: #5caee0; } .c-red { color: #e83030; } .c-pink { color: #c92666; }
.c-gray { color: #a8a6a2; } .c-brown { color: #ae5f2b; } .c-orange { color: #dd7626; } .c-yellow { color: #d0b925; }
.pw { width: 31px; margin-left: 3px; letter-spacing: -.15px; }
.input { background: #fff; border: 1px solid #66635d; border-right-color: #eee; border-bottom-color: #eee; }
.tools .input { width: 67px; height: 11px; margin-right: 8px; }
.cb { width: 8px; height: 8px; background: #fff; border: 1px solid #66635d; border-right-color: #eee; border-bottom-color: #eee; color: #111; }
.cb svg { width: 6px; height: 6px; }
.tools .cb { margin-right: 3px; }
.t1 { width: 41px; } .t2 { width: 37px; } .t3 { width: 113px; }
.t1, .t2, .t3 { letter-spacing: -.15px; }
.pn { margin-left: 4px; width: 43px; letter-spacing: -.15px; }
.combo.name { width: 85px; height: 12px; padding-left: 2px; margin-right: 3px; overflow: hidden; letter-spacing: -.05px; }
.filter { height: 15px; display: flex; align-items: center; }
.filter label { margin-left: 3px; width: 18px; }
.filter .combo { width: 84px; height: 12px; }
.prop { width: 11px; height: 10px; margin-left: 3px; }

/* lists */
.list { background: #fff; border: 1px solid #55534e; border-right-color: #e8e6e2; border-bottom-color: #e8e6e2; display: flex; overflow: hidden; }
.servers { height: 101px; width: 687px; margin-top: 1px; }
.tablepart { flex: 1; min-width: 0; overflow: hidden; }
.row { display: grid; width: 465px; height: 9.4px; grid-template-columns: 12px 11px 12px 9px 17px 165px 89px 44px 43px 63px; align-items: center; color: #747474; }
.row > span { grid-row: 1; }
.rows .row > span:nth-last-child(4) { grid-column: 7; } .rows .row > span:nth-last-child(3) { grid-column: 8; }
.rows .row > span:nth-last-child(2) { grid-column: 9; } .rows .row > span:last-child { grid-column: 10; }
.num { text-align: right; padding-right: 2px; }
.rows { padding-top: .5px; height: 89px; overflow: hidden; }
.row .n { grid-column: 6; }
.row .q { grid-column: 3; width: 12px; height: 9px; grid-row: 1; }
.row .s { grid-column: 2; width: 10px; height: 9px; grid-row: 1; justify-self: end; }
.row .k { grid-column: 4; width: 6px; height: 9px; grid-row: 1; margin-left: 2px; }
.row .f { grid-column: 5; grid-row: 1; }
.f { width: 14px; height: 8px; }
.quad { padding-left: 5px; }
.map, .red { color: #f04848; }
.gr, .blue em { color: #38a848; }
.blue { color: #4048d8; }
.blue em { color: #50e060; }
.bad .blue em { color: #e04048; }
.sel { background: #808080; color: #fff; }
.sel .map { color: #00c8c0; }
.bad { background: #ffe3e3; }
.bad > span:last-child { letter-spacing: -.2px; }
.row.head { width: 100%; grid-template-columns: 13px 213px 89px 44px 43px 63px 1fr; height: 10px; background: #d4d0c8; border-bottom: 1px solid #66635d; color: #222; align-items: stretch; line-height: 9px; }
.head span { border-right: 1px solid #55534e; padding-left: 1px; }
.nm, .hot { background: #969cae; }
.scroll { width: 10px; flex: none; background: #eae8e4; display: flex; flex-direction: column; }
.sb, .thumb { height: 10px; background: #d4d0c8; border: 1px solid #fff; border-right-color: #66635d; border-bottom-color: #66635d; }
.sb svg { width: 8px; height: 7px; }
.thumb { height: 45px; }
.vars .thumb { height: 12px; }
.end { margin-top: auto; }

.mid { display: flex; justify-content: space-between; height: 175px; margin-top: 3px; width: 687px; }
.info { width: 220px; border: 1px solid #66635d; border-right-color: #fff; border-bottom-color: #fff; padding: 2px 0 0 3px; }
.info h2 { font: inherit; margin: 0 0 7px; letter-spacing: -.15px; }
.graph { height: 22px; width: 214px; background: #c0c0e0; border: 1px solid #eee; border-right: 1px solid #303060; border-bottom: 2px solid #18903c; display: flex; }
.graph i { background: #f00; height: 19px; border-bottom: 1px solid #700; }
.graph .a { width: 19px; margin-left: 19px; } .graph .b { width: 22px; margin-left: 37px; } .graph .c { width: 26px; margin-left: 27px; } .graph .d { width: 19px; margin-left: 37px; }
.info dl { margin: 1px 0 0; display: grid; grid-template-columns: 55px 1fr; column-gap: 5px; grid-auto-rows: auto; line-height: 10.5px; }
dt { text-align: right; height: 10.5px; letter-spacing: -.12px; } dd { margin: 0; height: 10.5px; display: flex; align-items: center; }
dt.gap, dd.gap { height: 12.800px; padding-top: 1px; border-top: 1px solid #c9c5bd; }
.ort svg { margin-right: 1px; }
.bulb { width: 7px; height: 9px; margin: 0 5px 0 1px; }
.right { width: 464px; display: flex; flex-direction: column; justify-content: space-between; }
.players { height: 105px; }
.phead { height: 11px; width: 100%; background: #d4d0c8; border-bottom: 1px solid #66635d; display: grid; grid-template-columns: 12px 117px 1fr; line-height: 10px; }
.phead span, .vhead span { border-right: 1px solid #55534e; padding-left: 2px; }
.vars { height: 68px; }
.vrow { display: grid; grid-template-columns: 14px 92px 118px 1fr; height: 8.150px; line-height: 8px; }
.vrow .num { padding: 0 2px 0 0; }
.vrow span + span { padding-left: 0; }
.vhead { height: 11px; background: #d4d0c8; border-bottom: 1px solid #66635d; margin-bottom: .5px; line-height: 10px; }
.vhead span + span { padding-left: 1px; }

/* rcon panel */
.rcon { height: 166px; margin-top: 2px; border: 1px solid #55534e; border-top: 2px solid #55534e; border-bottom-color: #fff; display: flex; align-items: flex-start; padding: 5px 0 0 6px; }
fieldset { margin: 0; padding: 0; border: 1px solid #b0ada5; box-shadow: 1px 1px #f0eee8, inset 1px 1px #f0eee8; position: relative; height: 57px; display: flex; min-width: 0; margin-top: 3px; }
legend { position: absolute; top: -5px; left: 4px; background: #d4d0c8; padding: 0 1px; line-height: 9px; }
.fs1 { width: 164px; padding: 6px 0 0 6px; }
.fs2 { width: 97px; margin-left: 8px; padding: 6px 0 0 7px; flex-direction: column; }
.left { width: 90px; display: flex; flex-direction: column; }
.left .input { width: 83px; height: 12px; line-height: 10px; font-size: 7px; padding-left: 2px; }
.status { margin: 4px 0 6px 2px; letter-spacing: -.15px; }
.checks { display: flex; align-items: center; }
.checks span { margin-left: 3px; width: 38px; }
.checks span:last-child { width: auto; }
.btns { display: flex; flex-direction: column; gap: 2px; }
button { font: inherit; color: inherit; letter-spacing: inherit; width: 61px; height: 13.300px; padding: 0; line-height: 10px; background: #d4d0c8; border: 1px solid #fff; border-right: 1px solid #44423e; border-bottom: 1px solid #44423e; }
.fs2 button { width: 83px; }
button:disabled, .log { color: #96938c; text-shadow: 1px 1px #fff; }
.log { display: flex; margin-top: 3px; line-height: 8px; }
.log .cb { background: #d4d0c8; color: #77746e; margin-right: 4px; }
.auto { display: flex; margin: 5px 0 0 13px; line-height: 8px; letter-spacing: -.2px; }
.auto .cb { margin: 3px 3px 0 0; }

.tabs { height: 13px; border-bottom: 1px solid #f4f2ee; display: flex; align-items: flex-start; padding-left: 2px; }
.t { height: 11px; border: 1px solid #55534e; border-left-color: #fff; border-radius: 0 0 2px 2px; text-align: center; line-height: 10px; margin-right: 2px; flex: none; }
.t.cur { width: 64px; border-top-color: #d4d0c8; height: 12px; line-height: 12px; margin-right: 1px; }
.w1 { width: 30px; } .w2 { width: 24px; } .w3 { width: 30px; } .w4 { width: 52px; } .w5 { width: 34px; } .w6 { width: 56px; }

.statusbar { height: 12px; display: flex; align-items: center; padding-top: 1px; letter-spacing: -.1px; }
.rdy { width: 506px; }
.ge { width: 35px; } .em { width: 40px; }
.box { height: 9px; border: 1px solid #aaa69e; border-right-color: #f4f2ee; border-bottom-color: #f4f2ee; line-height: 8px; padding-left: 1px; }
.b1 { width: 46px; margin-right: 3px; } .b2 { width: 46px; }
.size { width: 8px; height: 9px; margin-left: 3px; }

/* taskbar */
.taskbar { height: 19px; flex: none; background: #d4d0c8; border-top: 1px solid #fff; display: flex; align-items: center; }
.start { width: 32px; height: 14px; margin: 0 4px 0 2px; border: 1px solid #fff; border-right-color: #44423e; border-bottom-color: #44423e; font-weight: bold; font-size: 7.2px; letter-spacing: -.1px; display: flex; align-items: center; }
.start svg { width: 9px; height: 9px; margin: 0 1px 0 0; }
.quick { display: flex; gap: 4.500px; margin-left: 4px; }
.quick svg { width: 10px; height: 10px; }
.s2 { margin-left: 22px; }
.task { width: 100px; height: 14px; margin-left: 2px; padding-left: 3px; background: #ebe9e4; border: 1px solid #66635d; border-right-color: #fff; border-bottom-color: #fff; font-weight: bold; display: flex; align-items: center; font-size: 7.2px; letter-spacing: -.3px; }
.task svg { width: 9px; height: 9px; margin-right: 2px; }
.tray { margin-left: auto; display: flex; align-items: center; }
.lang { width: 10px; height: 10px; background: #102a68; color: #fff; text-align: center; line-height: 10px; margin: 0 6px 0 5px; }
.pen { width: 6px; height: 12px; margin-right: 5px; }
.sys { height: 15px; width: 84px; border: 1px solid #96938c; border-right-color: #fff; border-bottom-color: #fff; display: flex; align-items: center; gap: 2px; padding-left: 1px; margin-right: 1px; }
.sys svg { width: 9.500px; height: 10px; }
.sys span { margin-left: 1px; font-size: 7.3px; }
```
